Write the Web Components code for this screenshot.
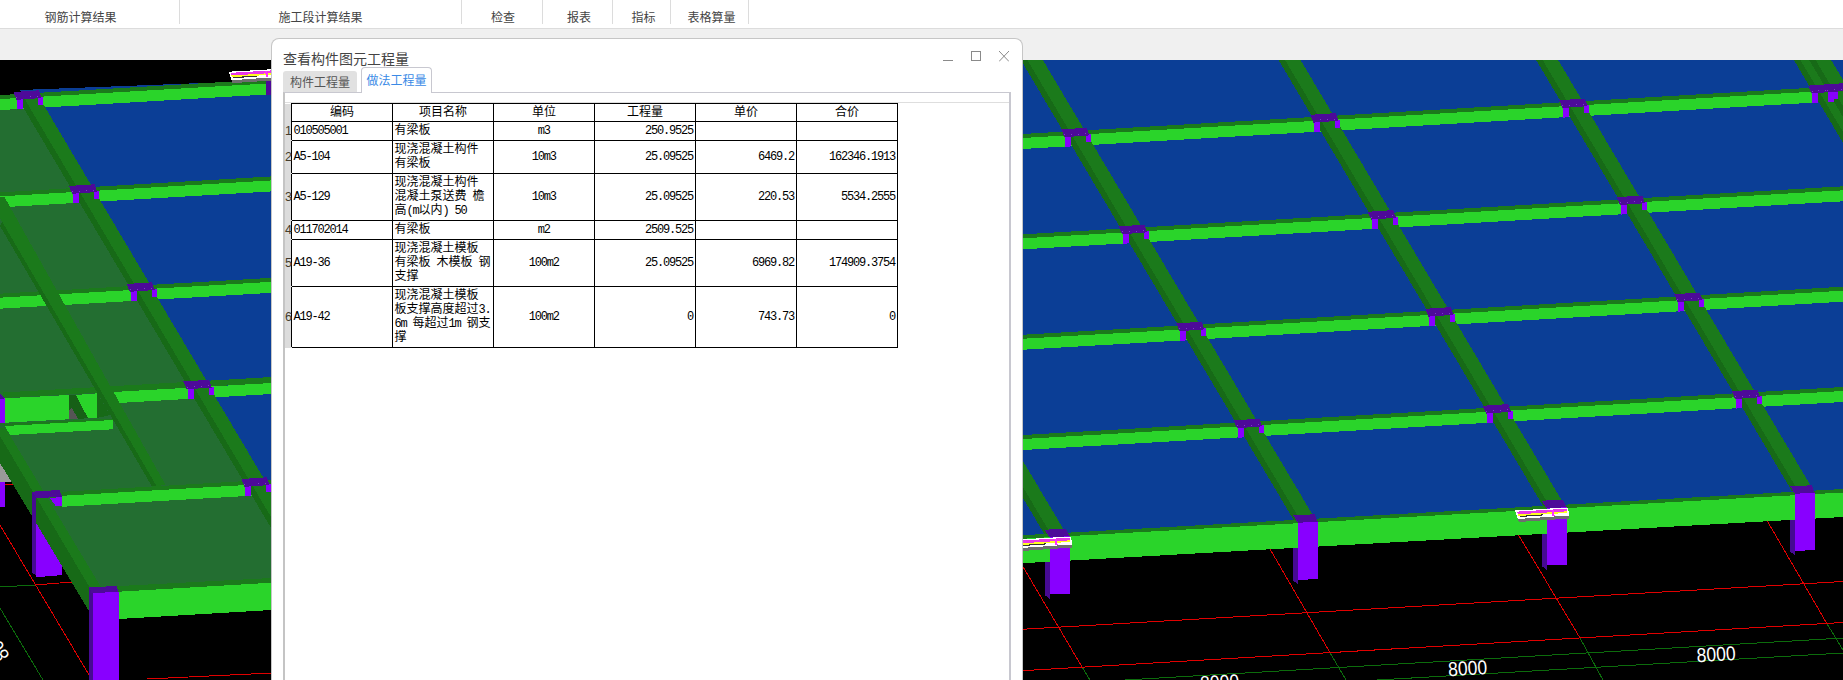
<!DOCTYPE html>
<html lang="zh">
<head>
<meta charset="utf-8">
<title>查看构件图元工程量</title>
<style>
  html, body { margin: 0; height: 680px; overflow: hidden; background: #f0f0f0; }
  body { position: relative; font-family: "Noto Sans CJK SC", "Liberation Sans", sans-serif; }
</style>
</head>
<body>
<app-toolbar>
  <tool-item style="--w:180px;--pr:18px">钢筋计算结果</tool-item>
  <tool-item style="--w:282px">施工段计算结果</tool-item>
  <tool-item style="--w:81px;--pl:2px">检查</tool-item>
  <tool-item style="--w:70px;--pl:3px">报表</tool-item>
  <tool-item style="--w:58px;--pl:4px">指标</tool-item>
  <tool-item style="--w:78px;--pl:4px">表格算量</tool-item>
</app-toolbar>
<model-view></model-view>
<quantity-dialog heading="查看构件图元工程量">
  <dialog-tab slot="tabs">构件工程量</dialog-tab>
  <dialog-tab slot="tabs" active>做法工程量</dialog-tab>
  <cost-table></cost-table>
</quantity-dialog>

<script>
class AppToolbar extends HTMLElement {
  constructor() {
    super();
    let shadow_element = this.attachShadow({ mode: "open" });
    shadow_element.innerHTML = `
    <style>
      :host { display: block; height: 28px; background: #fff; border-bottom: 1px solid #dcdcdc; }
      .bar { display: flex; height: 24px; }
    </style>
    <div class="bar"><slot></slot></div>`;
  }
}
customElements.define("app-toolbar", AppToolbar);

class ToolItem extends HTMLElement {
  constructor() {
    super();
    let shadow_element = this.attachShadow({ mode: "open" });
    shadow_element.innerHTML = `
    <style>
      :host {
        display: block;
        box-sizing: border-box;
        width: var(--w);
        height: 24px;
        padding: 9px var(--pr, 0) 0 var(--pl, 0);
        border-right: 1px solid #dcdcdc;
        text-align: center;
        font-size: 12px;
        line-height: 15px;
        color: #444;
      }
    </style>
    <slot></slot>`;
  }
}
customElements.define("tool-item", ToolItem);

// the 3D view: everything is a flat polygon in page coordinates
const BLUE = "#0b3e96", BRIGHT = "#2ad42a", BEAM = "#1b7a1b", BEAM_DARK = "#176a17";
const SLAB = "#236e31", PURPLE = "#8800ff", CAP = "#4d0a99", SIDE = "#460a93";
const ROW_K = -0.0586, DIAG_K = 0.593;

function poly(points, fill) {
  return `<polygon points="${points.map(p => p[0].toFixed(1) + "," + p[1].toFixed(1)).join(" ")}" fill="${fill}"/>`;
}
function line(x1, y1, x2, y2, color) {
  return `<line x1="${x1}" y1="${y1}" x2="${x2}" y2="${y2}" stroke="${color}" stroke-width="1"/>`;
}
function rowBeam(cx, cy, x0, x1) {
  const y = x => cy + (x - cx) * ROW_K;
  return poly([[x0, y(x0) - 1.5], [x1, y(x1) - 1.5], [x1, y(x1) + 2.5], [x0, y(x0) + 2.5]], BEAM) +
    poly([[x0, y(x0) + 2.5], [x1, y(x1) + 2.5], [x1, y(x1) + 13.5], [x0, y(x0) + 13.5]], BRIGHT);
}
function diagBeam(cx, cy, y0, y1) {
  const x = y => cx + (y - cy) * DIAG_K;
  return poly([[x(y0) - 11.5, y0], [x(y0) - 5, y0], [x(y1) - 5, y1], [x(y1) - 11.5, y1]], BEAM_DARK) +
    poly([[x(y0) - 5, y0], [x(y0) + 10.5, y0], [x(y1) + 10.5, y1], [x(y1) - 5, y1]], BEAM);
}
function capTop(cx, cy) {
  const a = [cx - 10.8, cy + 2.6], b = [cx + 13.6, cy + 1];
  return poly([[cx - 14, cy - 3], [cx + 11.5, cy - 4.7], [cx + 14.2, cy + 3], [cx - 10.8, cy + 4.8]], CAP) +
    `<line x1="${a[0]}" y1="${a[1]}" x2="${b[0]}" y2="${b[1]}" stroke="#7d3cc8" stroke-width="1" stroke-dasharray="1 6"/>`;
}
function node(cx, cy) {
  return poly([[cx - 10, cy + 4], [cx - 4, cy + 4], [cx - 4, cy + 14], [cx - 10, cy + 14.4]], PURPLE) +
    poly([[cx + 11, cy + 2], [cx + 16, cy + 2], [cx + 16, cy + 10], [cx + 11, cy + 10]], PURPLE) +
    capTop(cx, cy);
}
function frontColumnSide(cx, cy) {
  return poly([[cx - 11.5, cy], [cx - 6.5, cy], [cx - 6.5, cy + 61], [cx - 11.5, cy + 57.5]], SIDE);
}
function frontColumn(cx, cy) {
  return poly([[cx - 6.5, cy + 3.7], [cx + 13.5, cy + 2.5], [cx + 13.5, cy + 60], [cx - 6.5, cy + 61]], PURPLE) +
    poly([[cx - 11.5, cy - 3.8], [cx + 10, cy - 4.7], [cx + 13.5, cy + 2.7], [cx - 6.5, cy + 3.8]], CAP);
}
// the little rebar marker that floats in front of a column
function marker(cx, cy) {
  const tl = [cx - 38, cy + 6], tr = [cx + 15, cy + 3], br = [cx + 16, cy + 11], bl = [cx - 35, cy + 14.5];
  const at = (t, s) => {
    const l = [tl[0] + (bl[0] - tl[0]) * t, tl[1] + (bl[1] - tl[1]) * t];
    const r = [tr[0] + (br[0] - tr[0]) * t, tr[1] + (br[1] - tr[1]) * t];
    return [l[0] + (r[0] - l[0]) * s, l[1] + (r[1] - l[1]) * s];
  };
  const band = (t0, t1, c, s0 = 0.03, s1 = 0.97) => poly([at(t0, s0), at(t0, s1), at(t1, s1), at(t1, s0)], c);
  return poly([bl, br, [br[0], br[1] + 3], [bl[0] + 1, bl[1] + 3]], "#6e6e6e") +
    poly([tl, tr, br, bl], "#fff") +
    band(0.14, 0.46, "#e838e8") +
    band(0.46, 0.66, "#ffff20") +
    band(0.66, 0.78, "#333", 0.05, 0.5) +
    band(0.14, 0.9, "#ff30ff", 0.68, 0.72);
}

class ModelView extends HTMLElement {
  constructor() {
    super();
    let shadow_element = this.attachShadow({ mode: "open" });
    shadow_element.innerHTML = `
    <style>
      :host { display: block; height: 620px; margin-top: 31px; background: #000; }
      svg { display: block; }
      text { font-family: "Liberation Sans", sans-serif; font-size: 20px; fill: #fff; }
    </style>
    <svg width="1843" height="620" viewBox="0 60 1843 620" shape-rendering="crispEdges">${this.leftPart()}${this.rightPart()}</svg>`;
  }

  leftPart() {
    const nodes = [[27.3, 95], [83, 189], [140.5, 287], [197.5, 384.5], [255.3, 482]];
    let s = "";
    s += poly([[20, 90], [280, 80], [280, 530]], BLUE);
    s += line(0, 525, 92, 680, "#e00000") + line(0, 587, 35, 585, "#0c6c0c") + line(35, 585, 72, 582, "#e00000");
    s += line(0, 608, 43, 680, "#0c6c0c") + line(147, 679, 272, 673, "#e00000") + line(5, 485, 13, 484.5, "#e00000");
    s += poly([[0, 463], [12, 482], [0, 482]], "#9a9a9a");
    s += poly([[0, 482], [5, 482], [5, 507], [0, 507]], PURPLE);
    // column behind the front beam
    s += poly([[36, 496], [62.3, 496], [62.3, 575], [36, 577.3]], PURPLE);
    s += poly([[0, 100], [27, 95], [262.5, 491], [280, 520], [280, 580], [100, 595], [89, 600], [0, 463]], SLAB);
    // row beams
    s += rowBeam(27.3, 95, 0, 272);
    s += rowBeam(83, 189, 0, 272);
    s += rowBeam(140.5, 287, 0, 272);
    s += poly([[3, 392.5], [272, 377], [272, 383], [3, 398]], BEAM);
    s += poly([[113, 392], [272, 383], [272, 394], [118, 403]], BRIGHT);
    s += rowBeam(255.3, 482, 62, 272);
    // odd little stair opening on the left
    s += poly([[5, 398.3], [69, 395], [69, 419.3], [5, 422.7]], BRIGHT);
    s += poly([[69, 395], [76, 395], [88, 418.3], [69, 419.3]], "#175f17");
    s += poly([[69, 410], [72, 408], [78, 419], [69, 419.3]], "#555");
    s += poly([[76, 395], [97.3, 393.3], [97.3, 418], [88, 418.3]], BRIGHT);
    s += poly([[97.3, 393], [110, 415], [97.3, 418]], BEAM_DARK);
    s += poly([[0, 393], [4, 398], [5, 398.3], [0, 400]], CAP);
    s += poly([[0, 399], [5, 398.3], [5, 422.7], [0, 423.5]], PURPLE);
    s += poly([[2, 424], [113, 418.5], [113, 420], [5, 426]], BEAM);
    s += poly([[5, 426], [113, 420], [113, 429.3], [10, 435]], BRIGHT);
    // beam without columns in the middle of the slab
    s += poly([[0, 226], [4.5, 218], [104, 391], [156.5, 486], [151.7, 486]], BEAM_DARK);
    s += poly([[0, 218], [0, 197], [4.5, 197], [165.6, 485], [156.5, 486]], BEAM);
    // main line of columns
    for (let i = 0; i < 5; i++) {
      const n = nodes[i], next = nodes[i + 1] || [n[0] + 57.5, n[1] + 97];
      s += diagBeam(n[0], n[1], n[1], next[1]);
    }
    for (const n of nodes) s += node(n[0], n[1]);
    // far left beam and the front corner
    s += poly([[0, 436], [90, 588], [89, 611], [0, 463]], BEAM_DARK);
    s += poly([[0, 428], [5.6, 428], [101, 587], [90, 588], [0, 436]], BEAM);
    s += poly([[32.3, 492], [36.5, 492], [36, 575], [32.3, 573]], SIDE);
    s += poly([[32.3, 491.7], [59.3, 490], [62.3, 496.7], [36.7, 498.3]], CAP);
    s += poly([[50, 498], [62.3, 497], [62.3, 506], [56, 506.5]], PURPLE);
    s += poly([[100, 587], [272, 578], [272, 582.7], [118, 591.7]], BEAM);
    s += poly([[119, 591.7], [272, 582.7], [272, 610], [119, 619]], BRIGHT);
    s += poly([[89.3, 587.3], [92.7, 587.3], [92.7, 680], [89.3, 680]], SIDE);
    s += poly([[92.7, 593], [119, 591.7], [119, 680], [92.7, 680]], PURPLE);
    s += poly([[89.3, 587.3], [116.7, 586], [118.3, 591.7], [91.7, 593.3]], CAP);
    // top edge, column and marker that run under the dialog
    s += poly([[265.5, 78], [272, 78], [272, 95], [265.5, 95]], CAP);
    s += marker(266.6, 65.7);
    s += `<text transform="translate(10,656) rotate(-120) scale(.88,1)" shape-rendering="auto">8000</text>`;
    return s;
  }

  rightPart() {
    const ox = 1075.3, oy = 132.4, cx = 249, cy = -14.6, rx = 57.5, ry = 97;
    const at = (i, j) => [ox + i * cx + j * rx, oy + i * cy + j * ry];
    const front_y = (x, d) => 532.7 + d + (x - 1066.7) * -0.0563;
    let s = "";
    s += poly([[1000, 60], [1843, 60], [1843, front_y(1843, 0)], [1000, front_y(1000, 0)]], BLUE);
    // floor grid
    const red = "#e00000", green = "#0c6c0c";
    s += line(1022, 565, 1082, 667, red) + line(1082, 667, 1090, 680, green);
    s += line(1270, 549, 1330, 652.7, red) + line(1330, 652.7, 1346, 680, green);
    s += line(1518.6, 535, 1580, 638, red) + line(1580, 638, 1603, 680, green);
    s += line(1766.7, 520, 1826.7, 623.3, red) + line(1826.7, 623.3, 1843, 650, green);
    s += line(1022, 629.3, 1843, 581.5, red) + line(1022, 670.7, 1843, 622.5, red);
    s += line(1125, 680, 1843, 638, green) + line(1377, 680, 1843, 653, green);
    const front = [[1056, 533.5], [1304.5, 519], [1553, 504.5], [1801.5, 490]];
    for (const f of front) s += frontColumnSide(f[0], f[1] + 4);
    // rows run left to right, then the cross beams go on top of them
    for (let j = 0; j < 4; j++) {
      const n = at(0, j);
      s += rowBeam(n[0], n[1], 1000, 1843);
    }
    for (let i = -1; i < 4; i++) {
      const top = at(i, -1);
      s += diagBeam(top[0], top[1], 55, at(i, 4)[1]);
    }
    s += diagBeam(1837, 87.5, 55, 200);
    for (let i = -1; i < 4; i++) {
      for (let j = 0; j < 4; j++) {
        const n = at(i, j);
        s += node(n[0], n[1]);
      }
    }
    s += node(1838, 87.5);
    // front edge beam is thicker
    s += poly([[1000, front_y(1000, 0)], [1843, front_y(1843, 0)], [1843, front_y(1843, 3.5)], [1000, front_y(1000, 3.5)]], BEAM);
    s += poly([[1000, front_y(1000, 3.5)], [1843, front_y(1843, 3.5)], [1843, front_y(1843, 28)], [1000, front_y(1000, 28)]], BRIGHT);
    for (const f of front) s += frontColumn(f[0], f[1]);
    s += marker(front[0][0], front[0][1]);
    s += marker(front[2][0], front[2][1]);
    const label = (x, y) => `<text text-anchor="middle" transform="translate(${x},${y}) rotate(-3.4) scale(.88,1)" shape-rendering="auto">8000</text>`;
    s += label(1716.5, 661) + label(1468, 675) + label(1220, 689);
    return s;
  }
}
customElements.define("model-view", ModelView);

class DialogTab extends HTMLElement {
  constructor() {
    super();
    let shadow_element = this.attachShadow({ mode: "open" });
    shadow_element.innerHTML = `
    <style>
      :host {
        display: block;
        box-sizing: border-box;
        width: 74px;
        height: 21px;
        margin-right: 4px;
        background: #e1e1e1;
        border-radius: 3px 3px 0 0;
        text-align: center;
        font-size: 12px;
        line-height: 22px;
        color: #555;
      }
      :host([active]) {
        width: 71px;
        height: 26px;
        margin-bottom: -1px;
        position: relative;
        background: #fff;
        border: 1px solid #c8c8d0;
        border-bottom: none;
        border-radius: 4px 4px 0 0;
        line-height: 24px;
        color: #3a8ae6;
      }
    </style>
    <slot></slot>`;
  }
}
customElements.define("dialog-tab", DialogTab);

class QuantityDialog extends HTMLElement {
  constructor() {
    super();
    let shadow_element = this.attachShadow({ mode: "open" });
    const heading = this.getAttribute("heading");
    shadow_element.innerHTML = `
    <style>
      :host {
        position: absolute;
        left: 271px;
        top: 38px;
        box-sizing: border-box;
        width: 752px;
        height: 642px;
        display: flex;
        flex-direction: column;
        background: #fff;
        border: 1px solid #c6c6c6;
        border-bottom: none;
        border-radius: 8px 8px 0 0;
      }
      .title { display: flex; align-items: center; height: 28px; padding: 10px 11px 0 11px; box-sizing: border-box; flex: none; }
      .title span { flex: 1; font-size: 14px; line-height: 18px; color: #444; }
      .controls { display: flex; gap: 18px; margin-top: -4px; margin-right: 2px; }
      .controls svg { display: block; }
      .tabs { display: flex; align-items: flex-end; height: 25px; padding-left: 11px; flex: none; }
      .panel {
        flex: 1;
        margin: 0 11px;
        border-top: 1px solid #c8c8d0;
        border-left: 2px solid #c4c4c4;
        border-right: 2px solid #c8c8d0;
        padding-top: 9px;
      }
      .grid { border-top: 1px solid #dedede; }
    </style>
    <div class="title">
      <span>${heading}</span>
      <div class="controls">
        <svg width="10" height="11" viewBox="0 0 10 11" fill="none" stroke="#8a8a8a"><path d="M0 9.5H10"/></svg>
        <svg width="10" height="11" viewBox="0 0 10 11" fill="none" stroke="#8a8a8a"><rect x=".5" y=".5" width="9" height="9"/></svg>
        <svg width="10" height="11" viewBox="0 0 10 11" fill="none" stroke="#8a8a8a"><path d="M0 0L10 10.5M10 0L0 10.5"/></svg>
      </div>
    </div>
    <div class="tabs"><slot name="tabs"></slot></div>
    <div class="panel"><div class="grid"><slot></slot></div></div>`;
  }
}
customElements.define("quantity-dialog", QuantityDialog);

const COST_HEAD = ["编码", "项目名称", "单位", "工程量", "单价", "合价"];
const COST_ROWS = [
  { h: 19, cells: ["010505001", "有梁板", "m3", "250.9525", "", ""] },
  { h: 33, cells: ["A5-104", "现浇混凝土构件<br>有梁板", "10m3", "25.09525", "6469.2", "162346.1913"] },
  { h: 47, cells: ["A5-129", "现浇混凝土构件<br>混凝土泵送费 檐<br>高(m以内) 50", "10m3", "25.09525", "220.53", "5534.2555"] },
  { h: 19, cells: ["011702014", "有梁板", "m2", "2509.525", "", ""] },
  { h: 47, cells: ["A19-36", "现浇混凝土模板<br>有梁板 木模板 钢<br>支撑", "100m2", "25.09525", "6969.82", "174909.3754"] },
  { h: 61, cells: ["A19-42", "现浇混凝土模板<br>板支撑高度超过3.<br>6m 每超过1m 钢支<br>撑", "100m2", "0", "743.73", "0"] },
];

class CostTable extends HTMLElement {
  constructor() {
    super();
    let shadow_element = this.attachShadow({ mode: "open" });
    // latin runs are squeezed to the 6px advance of the old bitmap font
    const latin = text => text.replace(/[\x20-\x7e]+(?![^<]*>)/g, m => `<span class="l">${m}</span>`);
    const head = COST_HEAD.map(t => `<th>${t}</th>`).join("");
    const rows = COST_ROWS.map((row, i) => {
      const tds = row.cells.map((t, c) => {
        const cls = c === 2 ? "c" : c > 2 ? "r" : "";
        return `<td class="${cls}">${latin(t)}</td>`;
      }).join("");
      return `<tr style="height:${row.h}px"><td class="no">${i + 1}</td>${tds}</tr>`;
    }).join("");
    shadow_element.innerHTML = `
    <style>
      :host { display: block; }
      table {
        table-layout: fixed;
        border-collapse: collapse;
        width: 613px;
        font: 12px/14px "Liberation Mono", "Noto Sans CJK SC", monospace;
        color: #000;
      }
      col.gutter { width: 6.5px; }
      col.data { width: 101px; }
      th, td { border: 1px solid #000; padding: 0 2px 0 1.5px; vertical-align: middle; overflow: hidden; white-space: nowrap; }
      th { font-weight: normal; text-align: center; padding: 0; }
      th.no, td.no {
        border-top: none; border-bottom: none; border-left: none;
        background: #dcdcdc;
        padding: 0;
        overflow: visible;
        font: 12.5px/14px "Liberation Sans", sans-serif;
        color: #443c2c;
        text-align: left;
      }
      td.no { border-bottom: 1px solid #dcdcdc; }
      .c { text-align: center; }
      .r { text-align: right; }
      .l { letter-spacing: -1.2px; }
    </style>
    <table>
      <colgroup><col class="gutter">${COST_HEAD.map(() => '<col class="data">').join("")}</colgroup>
      <tr style="height:18px"><th class="no"></th>${head}</tr>
      ${rows}
    </table>`;
  }
}
customElements.define("cost-table", CostTable);
</script>
</body>
</html>
